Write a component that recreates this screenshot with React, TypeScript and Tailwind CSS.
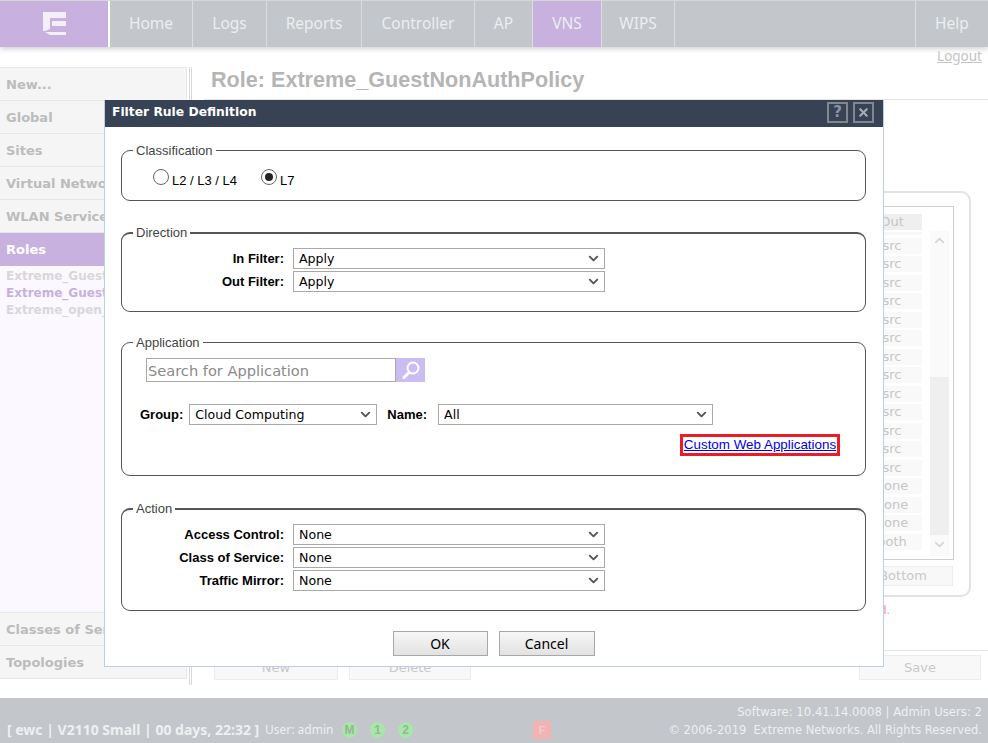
import { ChevronDown, ChevronUp, X } from 'lucide-react';

const navItems = [
  { name: 'Home', width: 'w-[83px]' },
  { name: 'Logs', width: 'w-[74px]' },
  { name: 'Reports', width: 'w-[95px]' },
  { name: 'Controller', width: 'w-[113px]' },
  { name: 'AP', width: 'w-[58px]' },
  { name: 'VNS', width: 'w-[69px]', active: true },
  { name: 'WIPS', width: 'w-[73px]' },
];

const topSideItems = ['New...', 'Global', 'Sites', 'Virtual Networks', 'WLAN Services'];
const bottomSideItems = ['Classes of Service', 'Topologies'];

const filterRows = [
  'src', 'src', 'src', 'src', 'src', 'src', 'src', 'src', 'src', 'src', 'src', 'src', 'src',
  'none', 'none', 'none', 'both',
];

const tahoma = 'font-["Noto_Sans",sans-serif]';
const dejavu = 'font-["DejaVu_Sans",sans-serif]';

function SideItem({ name }: { name: string }) {
  return (
    <div className={`h-[33px] pl-[6px] pt-[2px] flex items-center bg-[#f5f5f5] border-b border-[#e6e6e6] text-[13px] font-bold text-[#bcbcbc] whitespace-nowrap ${dejavu}`}>
      {name}
    </div>
  );
}

function Select({ value, className }: { value: string; className: string }) {
  return (
    <div className={`h-[21px] border border-[#a9a9a9] bg-white flex items-center justify-between pl-[5px] pr-[3px] text-[12.6px] text-black ${dejavu} ${className}`}>
      <span className="pt-[1px]">{value}</span>
      <ChevronDown size={15} strokeWidth={3} className="text-[#555]" />
    </div>
  );
}

function LabelSelect({ label, value }: { label: string; value: string }) {
  return (
    <div className="flex items-center h-[21px] mb-[2px]">
      <div className="w-[162px] text-right text-[13px] font-bold text-black">{label}</div>
      <Select value={value} className="ml-[9px] w-[312px]" />
    </div>
  );
}

function Group({ title, thick, className, children }: { title: string; thick?: boolean; className: string; children: React.ReactNode }) {
  return (
    <fieldset className={`border-x border-b border-[#555] rounded-[9px] ${thick ? 'border-t-2' : 'border-t'} ${className}`}>
      <legend className="ml-[11px] pl-[3px] pr-[3px] text-[13px] leading-[15px] text-[#444]">{title}</legend>
      {children}
    </fieldset>
  );
}

function Radio({ label, checked }: { label: string; checked?: boolean }) {
  return (
    <div className="flex items-center">
      <span className="w-[16px] h-[16px] rounded-full border border-[#666] flex items-center justify-center bg-white">
        {checked && <span className="w-[8px] h-[8px] rounded-full bg-[#222]" />}
      </span>
      <span className="ml-[3px] mt-[7px] text-[13px] text-black">{label}</span>
    </div>
  );
}

function DimButton({ label, className }: { label: string; className: string }) {
  return (
    <div className={`h-[25px] bg-[#f8f8f8] border border-[#ececec] flex items-center justify-center text-[13px] text-[#c8c8c8] ${dejavu} ${className}`}>
      {label}
    </div>
  );
}

function Badge({ label }: { label: string }) {
  return (
    <span className="w-[15px] h-[16px] rounded-full bg-[#a9e6a9] flex items-center justify-center text-[12px] font-bold text-[#93b893]">
      {label}
    </span>
  );
}

function Modal() {
  return (
    <div className="absolute left-[104px] top-[100px] w-[780px] h-[567px] bg-white border border-[#b9cfe4] border-t-0 font-['Liberation_Sans',sans-serif]">
      <div className="h-[27px] bg-[#374354] flex items-center pl-[7px] pr-[9px]">
        <span className={`text-[12.3px] font-bold text-white ${dejavu} mt-[-3px]`}>Filter Rule Definition</span>
        <div className="ml-auto flex gap-[5px] mt-[-2px]">
          <span className={`w-[21px] h-[21px] border-2 border-[#808791] flex items-center justify-center text-[15px] font-bold text-[#8d939c] ${dejavu}`}>?</span>
          <span className="w-[21px] h-[21px] border-2 border-[#808791] flex items-center justify-center text-[#a6abb2]">
            <X size={13} strokeWidth={4} />
          </span>
        </div>
      </div>

      <div className="pl-[16px] pr-[17px] pt-[16px]">
        <Group title="Classification" className="h-[58px]">
          <div className="flex pt-[6px] pl-[31px] gap-[24px]">
            <Radio label="L2 / L3 / L4" />
            <Radio label="L7" checked />
          </div>
        </Group>

        <Group title="Direction" thick className="h-[87px] mt-[24px]">
          <div className="pt-[8px]">
            <LabelSelect label="In Filter:" value="Apply" />
            <LabelSelect label="Out Filter:" value="Apply" />
          </div>
        </Group>

        <Group title="Application" className="h-[141px] mt-[23px]">
          <div className="flex pt-[8px] pl-[24px]">
            <div className={`w-[250px] h-[24px] border border-[#a9a9a9] flex items-center pl-[1px] pt-[1px] text-[14.6px] text-[#8a8a8a] ${dejavu}`}>
              Search for Application
            </div>
            <div className="w-[29px] h-[24px] bg-[#cbbdf4] flex items-center justify-center">
              <svg width="20" height="20" viewBox="0 0 20 20" fill="none" stroke="#fff">
                <circle cx="12" cy="8" r="5.5" strokeWidth="2" />
                <path d="M8 12.5L3 17.5" strokeWidth="3" strokeLinecap="round" />
              </svg>
            </div>
          </div>
          <div className="flex items-center pt-[22px] pl-[18px]">
            <span className="text-[13px] font-bold text-black">Group:</span>
            <Select value="Cloud Computing" className="ml-[6px] w-[188px]" />
            <span className="ml-[10px] text-[13px] font-bold text-black">Name:</span>
            <Select value="All" className="ml-[11px] w-[275px]" />
          </div>
          <div className="flex justify-end pr-[25px] pt-[9px]">
            <a href="#" className="border-[3px] border-[#ed1c24] w-[160px] text-center h-[22px] leading-[15px] text-[13.4px] text-[#0000ee] underline whitespace-nowrap">
              Custom Web Applications
            </a>
          </div>
        </Group>

        <Group title="Action" thick className="h-[110px] mt-[25px]">
          <div className="pt-[8px]">
            <LabelSelect label="Access Control:" value="None" />
            <LabelSelect label="Class of Service:" value="None" />
            <LabelSelect label="Traffic Mirror:" value="None" />
          </div>
        </Group>

        <div className={`flex justify-center gap-[11px] mt-[20px] text-[14px] text-black ${tahoma}`}>
          <button className="w-[95px] h-[25px] pb-[1px] border border-[#a8a8a8] bg-gradient-to-b from-[#f7f7f7] to-[#e2e2e2]">OK</button>
          <button className="w-[96px] h-[25px] pb-[1px] border border-[#a8a8a8] bg-gradient-to-b from-[#f7f7f7] to-[#e2e2e2]">Cancel</button>
        </div>
      </div>
    </div>
  );
}

export default function App() {
  return (
    <div className="relative w-[988px] h-[743px] overflow-hidden bg-white flex flex-col font-['Liberation_Sans',sans-serif]">
      {/* Top nav */}
      <div className={`h-[47px] shrink-0 flex bg-[#c3c6ca] border-t border-[#d4d6d8] shadow-[0_2px_5px_rgba(0,0,0,0.18)] text-[15.5px] text-[#eceef0] ${tahoma}`}>
        <div className="w-[110px] bg-[#c8b1de] border-r-2 border-white flex items-center pl-[43px]">
          <svg width="24" height="24" viewBox="0 0 24 24">
            <path d="M0 0H23V6H7V17L2 19H0Z M9 9H23V14H9Z M2 20H23V23H7Z" fill="#f4eef8" />
          </svg>
        </div>
        {navItems.map((item) => (
          <div
            key={item.name}
            className={`${item.width} pb-[1px] flex items-center justify-center border-r border-[#dcdee0] ${item.active ? 'bg-[#c8b1de]' : ''}`}
          >
            {item.name}
          </div>
        ))}
        <div className="flex-1 border-r border-[#dcdee0]" />
        <div className="w-[72px] pb-[1px] flex items-center justify-center">Help</div>
      </div>

      <div className={`h-[20px] shrink-0 flex justify-end pr-[6px] leading-[18px] text-[13.5px] text-[#c4c4c4] underline ${tahoma}`}>
        Logout
      </div>

      {/* Body */}
      <div className="flex-1 flex min-h-0">
        <div className="w-[187px] shrink-0 h-[612px] flex flex-col border border-l-0 border-[#e6e6e6] border-b-0">
          {topSideItems.map((name) => (
            <SideItem key={name} name={name} />
          ))}
          <div className={`h-[33px] pl-[6px] flex items-center bg-[#c8b1de] text-[13px] font-bold text-white ${dejavu}`}>Roles</div>
          <div className={`flex-1 bg-[#fbf9ff] pt-[2px] pl-[6px] text-[12px] leading-[17px] font-bold whitespace-nowrap ${dejavu}`}>
            <div className="text-[#d8d8d8]">Extreme_GuestAuthPolicy</div>
            <div className="text-[#c8b1de]">Extreme_GuestNonAuthPolicy</div>
            <div className="text-[#d8d8d8]">Extreme_open_policy</div>
          </div>
          <div className="border-t border-[#e6e6e6]">
            {bottomSideItems.map((name) => (
              <SideItem key={name} name={name} />
            ))}
          </div>
        </div>

        <div className="ml-[2px] w-[3px] h-[618px] shrink-0 border-x border-[#d8d8d8]" />

        <div className="ml-[12px] flex-1 min-w-0">
          <div className="h-[32px] pl-[7px] text-[21.6px] leading-[25px] font-bold text-[#b5b5b5] whitespace-nowrap">
            Role: Extreme_GuestNonAuthPolicy
          </div>

          <div className="h-[552px] border-t border-l border-b border-[#e4e4e4] relative flex flex-col items-end pr-[17px] pt-[91px]">
            <div className="w-[300px] h-[406px] border-2 border-[#e2e2e2] rounded-[10px] pt-[13px] pr-[15px] flex flex-col items-end">
              <div className="w-[200px] h-[354px] border border-[#cfcfcf] flex justify-end pt-[7px] pr-[4px]">
                <div className={`w-[60px] text-center text-[13px] text-[#c6c6c6] ${dejavu}`}>
                  <div className="h-[16px] leading-[16px] bg-[#efefef] mb-[2px]">Out</div>
                  <div className="h-[3px] bg-[#f8f8f8] mb-[2.6px]" />
                  {filterRows.map((row, i) => (
                    <div key={i} className="h-[16px] leading-[16px] bg-[#f9f9f9] mb-[2.5px]">{row}</div>
                  ))}
                </div>
                <div className="ml-[8px] w-[19px] h-[325px] mt-[17px] bg-[#fafafa] flex flex-col items-center">
                  <ChevronUp size={15} strokeWidth={2.5} className="text-[#d4d4d4] mt-[2px]" />
                  <div className="mt-[129px] w-full h-[158px] bg-[#efefef]" />
                  <ChevronDown size={15} strokeWidth={2.5} className="text-[#d4d4d4] mt-[2px]" />
                </div>
              </div>
              <DimButton label="Bottom" className="mt-[6px] w-[100px] !h-[20px] mr-[1px]" />
            </div>
            <div className="w-full flex justify-end pr-[81px] pt-[3px] text-[13px] text-[#f5a0a0]">Not applied.</div>
          </div>

          <div className="flex pt-[4px] pl-[10px]">
            <DimButton label="New" className="w-[124px]" />
            <DimButton label="Delete" className="ml-[11px] w-[122px]" />
            <DimButton label="Save" className="ml-auto mr-[7px] w-[122px]" />
          </div>
        </div>
      </div>

      {/* Footer */}
      <div className="h-[45px] shrink-0 bg-[#c3c6ca] relative flex items-end pb-[4px] pl-[7px] pr-[6px] text-[#eef0f2]">
        <span className={`w-[258px] text-[14px] leading-[18px] font-bold whitespace-nowrap ${tahoma}`}>[ ewc | V2110 Small | 00 days, 22:32 ]</span>
        <span className={`w-[77px] text-[12px] leading-[18px] whitespace-nowrap ${tahoma}`}>User: admin</span>
        <div className="w-[191px] flex gap-[13px] mb-[1px]">
          <Badge label="M" />
          <Badge label="1" />
          <Badge label="2" />
        </div>
        <span className="w-[18px] h-[18px] bg-[#f3b3b3] flex items-center justify-center text-[11px] font-bold text-[#e8d0d0]">F</span>
        <div className={`ml-auto text-right text-[11.5px] leading-[18px] whitespace-nowrap ${dejavu}`}>
          <div className="text-[11.7px]">Software: 10.41.14.0008 | Admin Users: 2</div>
          <div>© 2006-2019&nbsp; Extreme Networks. All Rights Reserved.</div>
        </div>
      </div>

      <Modal />
    </div>
  );
}
